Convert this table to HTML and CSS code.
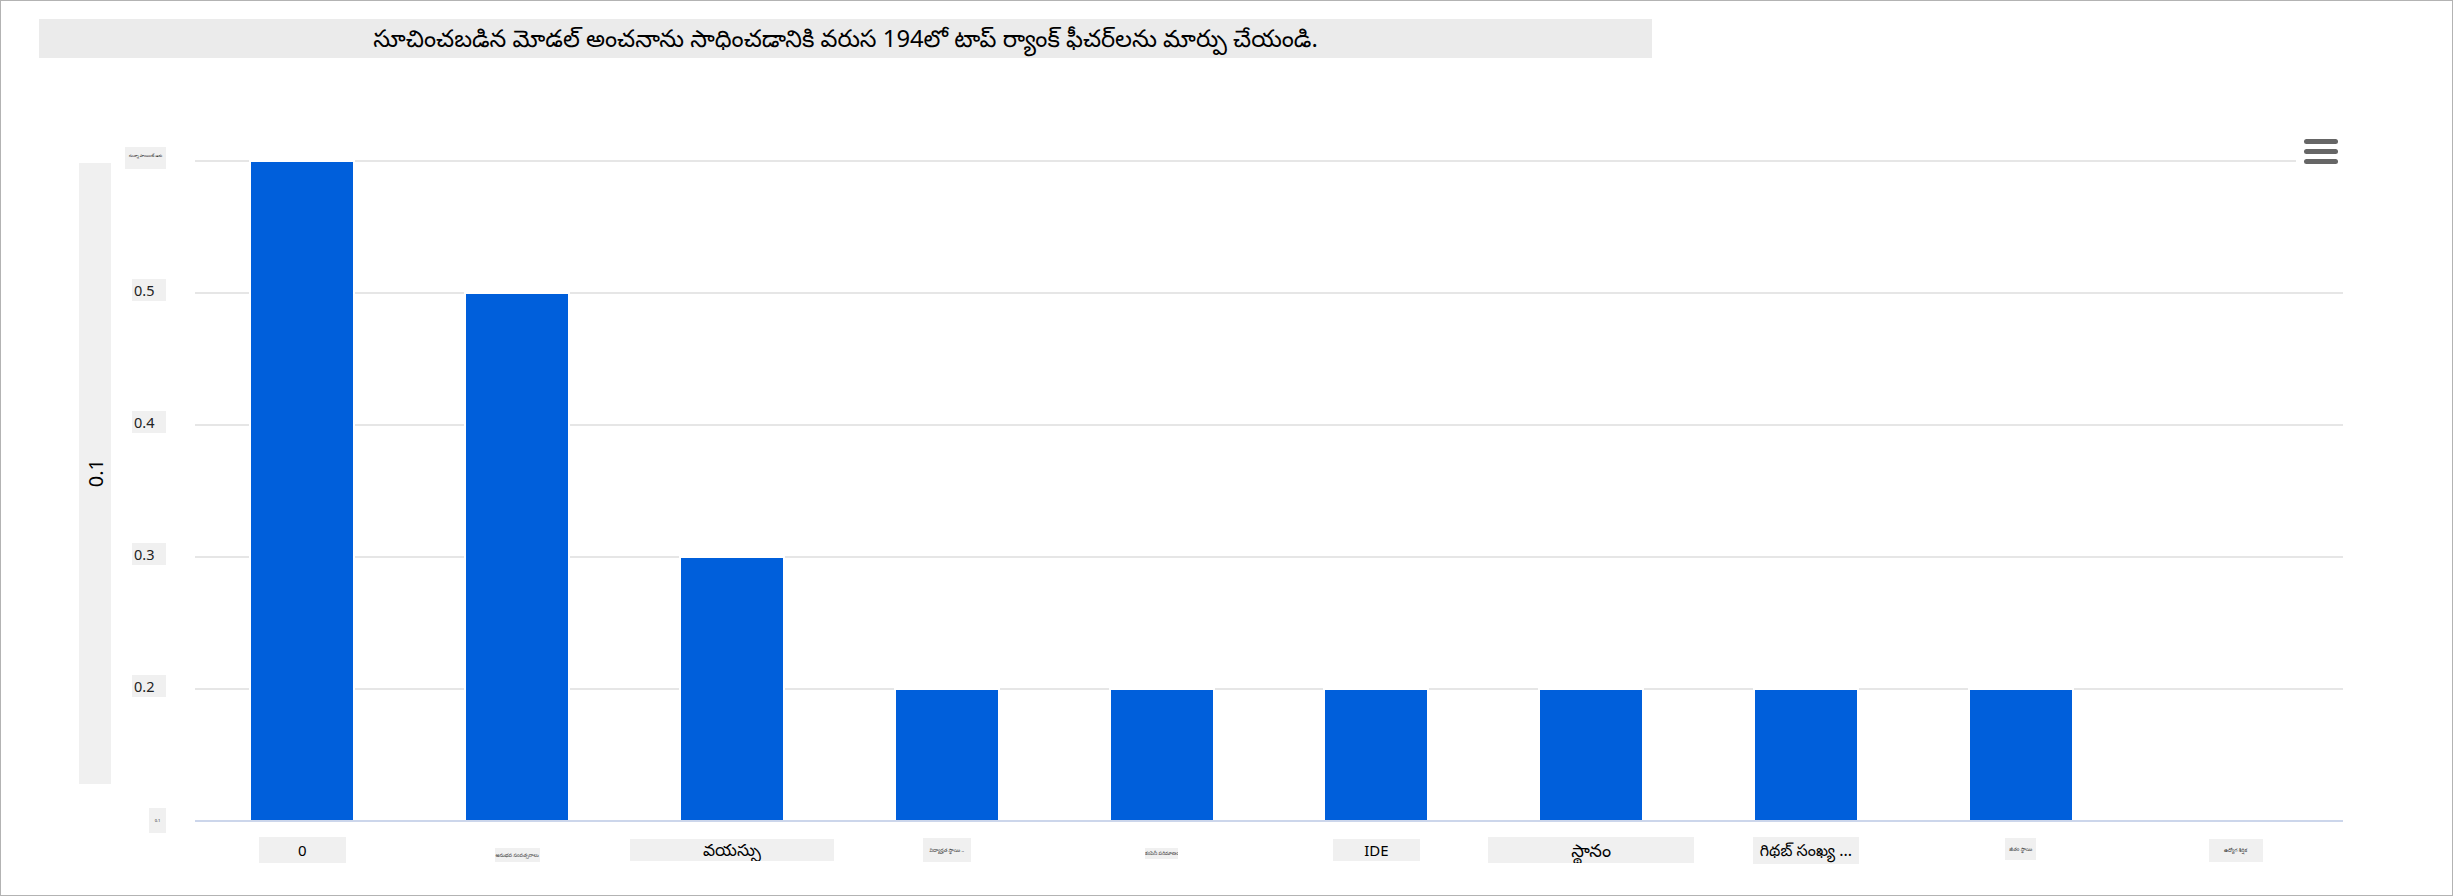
FILE: index.html
```html
<!DOCTYPE html>
<html lang="te">
<head>
<meta charset="utf-8">
<title>ఫీచర్ ర్యాంకింగ్</title>
<link rel="stylesheet" href="styles.css">
</head>
<body>
<div class="frame">
  <div class="title">సూచించబడిన మోడల్ అంచనాను సాధించడానికి వరుస 194లో టాప్ ర్యాంక్ ఫీచర్‌లను మార్పు చేయండి.</div>
  <div class="chart">
    <div class="ytitle"><span>0.1</span></div>
    <div class="ticks">
      <div class="tick tick-tiny">సున్నా పాయింట్ ఆరు</div>
      <div class="tick">0.5</div>
      <div class="tick">0.4</div>
      <div class="tick">0.3</div>
      <div class="tick">0.2</div>
      <div class="tick tick-bottom">0.1</div>
    </div>
    <div class="plot">
      <div class="cat"><div class="bar" style="height:660px"></div></div>
      <div class="cat"><div class="bar" style="height:528px"></div></div>
      <div class="cat"><div class="bar" style="height:264px"></div></div>
      <div class="cat"><div class="bar" style="height:132px"></div></div>
      <div class="cat"><div class="bar" style="height:132px"></div></div>
      <div class="cat"><div class="bar" style="height:132px"></div></div>
      <div class="cat"><div class="bar" style="height:132px"></div></div>
      <div class="cat"><div class="bar" style="height:132px"></div></div>
      <div class="cat"><div class="bar" style="height:132px"></div></div>
      <div class="cat"></div>
      <div class="menu" aria-label="చార్ట్ మెను">
        <span class="menu-line"></span>
        <span class="menu-line"></span>
        <span class="menu-line"></span>
      </div>
    </div>
    <div class="xlabels">
      <div class="xcat"><div class="xl xl-0">0</div></div>
      <div class="xcat"><div class="xl xl-tiny xl-2">అనుభవ సంవత్సరాలు</div></div>
      <div class="xcat"><div class="xl xl-3">వయస్సు</div></div>
      <div class="xcat"><div class="xl xl-tiny xl-4">విద్యార్హత స్థాయి ..</div></div>
      <div class="xcat"><div class="xl xl-tiny xl-5">కంపెనీ పరిమాణం</div></div>
      <div class="xcat"><div class="xl xl-6">IDE</div></div>
      <div class="xcat"><div class="xl xl-7">స్థానం</div></div>
      <div class="xcat"><div class="xl xl-8">గిథబ్ సంఖ్య ...</div></div>
      <div class="xcat"><div class="xl xl-tiny xl-9">జీతం స్థాయి</div></div>
      <div class="xcat"><div class="xl xl-tiny xl-10">ఉద్యోగ శీర్షిక</div></div>
    </div>
  </div>
</div>
</body>
</html>
```

FILE: styles.css
```css
html, body {
  margin: 0;
  padding: 0;
  background: #fff;
}

body {
  font-family: "Noto Sans", "Noto Sans Telugu", "Open Sans", "DejaVu Sans", sans-serif;
  color: #111;
}

.frame {
  width: 2453px;
  height: 896px;
  box-sizing: border-box;
  border: 1px solid #b3b3b3;
  padding: 18px 0 0 38px;
  overflow: hidden;
}

.title {
  width: 1613px;
  height: 39px;
  background: #ebebeb;
  text-align: center;
  line-height: 39px;
  font-size: 23.8px;
  color: #000;
  white-space: nowrap;
}

.chart {
  margin-top: 89px;
  margin-left: 40px;
  display: grid;
  grid-template-columns: 32px 84px 2148px;
  grid-template-rows: auto auto;
}

.ytitle {
  grid-column: 1;
  grid-row: 1;
  margin-top: 16px;
  height: 621px;
  background: #f0f0f0;
  display: flex;
  align-items: center;
  justify-content: center;
}

.ytitle span {
  writing-mode: vertical-rl;
  transform: rotate(180deg);
  font-size: 20px;
  color: #000;
}

.ticks {
  grid-column: 2;
  grid-row: 1;
  height: 675px;
  display: flex;
  flex-direction: column;
  align-items: flex-end;
  padding-right: 29px;
  gap: 110px;
}

.tick {
  flex: none;
  width: 34px;
  height: 22px;
  box-sizing: border-box;
  padding-left: 2px;
  background: #f0f0f0;
  font-size: 14.5px;
  line-height: 22px;
  color: #222;
  white-space: nowrap;
  overflow: hidden;
}

.tick-tiny {
  width: 41px;
  font-size: 4px;
  line-height: 18px;
  padding-left: 4px;
}

.tick-bottom {
  width: 17px;
  height: 25px;
  font-size: 4px;
  line-height: 25px;
  margin-top: 1px;
  text-align: center;
  padding-left: 0;
}

.plot {
  grid-column: 3;
  grid-row: 1;
  margin-top: 13px;
  height: 660px;
  border-bottom: 2px solid #ccd6eb;
  background: repeating-linear-gradient(to bottom, #e6e6e6 0, #e6e6e6 2px, transparent 2px, transparent 132px);
  display: flex;
  align-items: flex-end;
  position: relative;
}

.cat {
  flex: 1;
  display: flex;
  justify-content: center;
  align-items: flex-end;
}

.bar {
  width: 106px;
  box-sizing: border-box;
  border: 2px solid #fff;
  border-bottom: 0;
  background: #005fdb;
  background-clip: padding-box;
}

.menu {
  position: absolute;
  left: 2101px;
  top: -30px;
  width: 50px;
  height: 42px;
  background: #fff;
  display: flex;
  flex-direction: column;
  align-items: center;
  justify-content: center;
  gap: 5px;
}

.menu-line {
  display: block;
  width: 34px;
  height: 5px;
  border-radius: 3px;
  background: #666;
}

.xlabels {
  grid-column: 3;
  grid-row: 2;
  margin-top: 14px;
  height: 28px;
  display: flex;
}

.xcat {
  flex: 1;
  display: flex;
  justify-content: center;
  align-items: center;
}

.xl {
  background: #f0f0f0;
  text-align: center;
  white-space: nowrap;
  overflow: hidden;
  color: #000;
  font-size: 15px;
}

.xl-tiny {
  font-size: 5px;
  color: #333;
}

.xl-0 { width: 87px; height: 26px; line-height: 26px; }
.xl-2 { width: 45px; height: 14px; line-height: 14px; margin-top: 10px; }
.xl-3 { width: 204px; height: 22px; line-height: 22px; font-size: 17px; }
.xl-4 { width: 48px; height: 24px; line-height: 24px; }
.xl-5 { width: 33px; height: 11px; line-height: 11px; margin-top: 7px; }
.xl-6 { width: 87px; height: 22px; line-height: 22px; }
.xl-7 { width: 206px; height: 26px; line-height: 26px; font-size: 18px; }
.xl-8 { width: 106px; height: 27px; line-height: 27px; font-size: 16px; }
.xl-9 { width: 31px; height: 22px; line-height: 22px; margin-top: -2px; }
.xl-10 { width: 54px; height: 23px; line-height: 23px; }
```
